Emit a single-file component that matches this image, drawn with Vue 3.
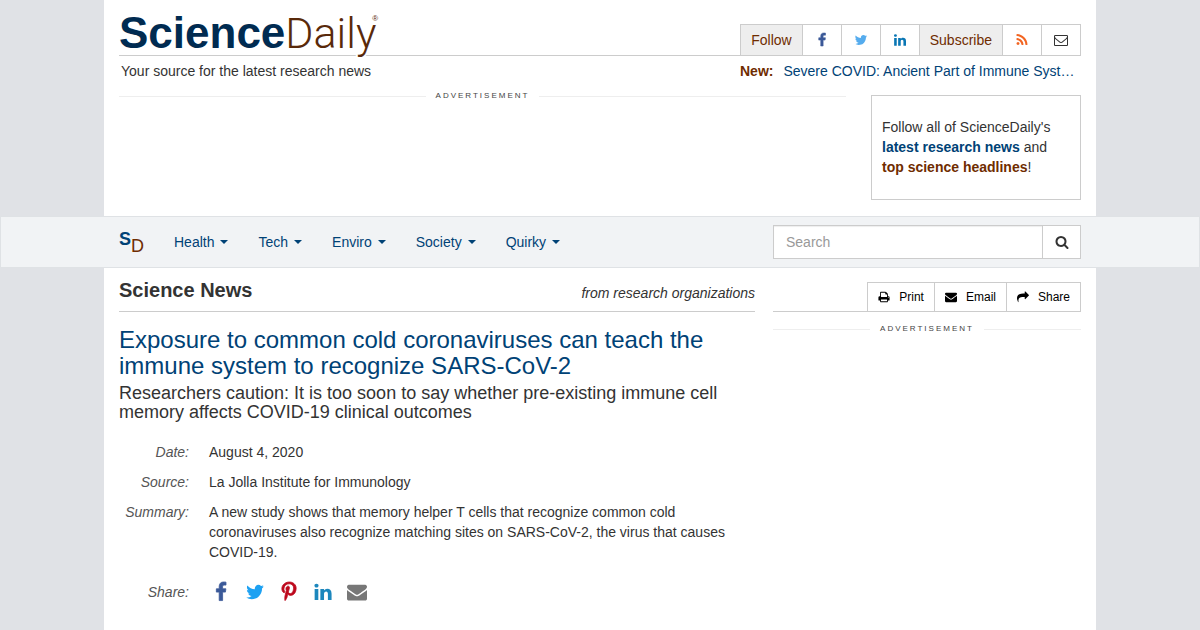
<script setup>
const icons = {
  facebook: 'M1343 12v264h-157q-86 0-116 36t-30 108v189h293l-39 296h-254v759h-306v-759h-255v-296h255v-218q0-186 104-288.5t277-102.5q147 0 228 12z',
  twitter: 'M1684 408q-67 98-162 167 1 14 1 42 0 130-38 259.5t-115.5 248.5-184.5 210.5-258 146-323 54.5q-271 0-496-145 35 4 78 4 225 0 401-138-105-2-188-64.5t-114-159.5q33 5 61 5 43 0 85-11-112-23-185.5-111.5t-73.5-205.5v-4q68 38 146 41-66-44-105-115t-39-154q0-88 44-163 121 149 294.5 238.5t371.5 99.5q-8-38-8-74 0-134 94.5-228.5t228.5-94.5q140 0 236 102 109-21 205-78-37 115-142 178 93-10 186-50z',
  linkedin: 'M477 625v991h-330v-991h330zm21-306q1 73-50.5 122t-135.5 49h-2q-82 0-132-49t-50-122q0-74 51.5-122.5t134.5-48.5 133 48.5 51 122.5zm1166 729v568h-329v-530q0-105-40.5-164.5t-126.5-59.5q-63 0-105.5 34.5t-63.5 85.5q-11 30-11 81v553h-329q2-399 2-647t-1-296l-1-48h329v144h-2q20-32 41-56t56.5-52 87-43.5 114.5-15.5q171 0 275 113.5t104 332.5z',
  rss: 'M576 1344q0 80-56 136t-136 56-136-56-56-136 56-136 136-56 136 56 56 136zm512 123q2 28-17 48-18 21-47 21h-135q-25 0-43-16.5t-20-41.5q-22-229-184.5-391.5t-391.5-184.5q-25-2-41.5-20t-16.5-43v-135q0-29 21-47 17-17 43-17h5q160 13 306 80.5t259 181.5q114 113 181.5 259t80.5 306zm512 2q2 27-18 47-18 20-46 20h-143q-26 0-44.5-17.5t-19.5-42.5q-12-215-101-408.5t-231.5-336-336-231.5-408.5-102q-25-1-42.5-19.5t-17.5-43.5v-143q0-28 20-46 18-18 44-18h3q262 13 501.5 120t425.5 294q187 186 294 425.5t120 501.5z',
  envelopeOutline: 'M1664 1504v-768q-32 36-69 66-268 206-426 338-51 43-83 67t-86.5 48.5-102.5 24.5h-2q-48 0-102.5-24.5t-86.5-48.5-83-67q-158-132-426-338-37-30-69-66v768q0 13 9.5 22.5t22.5 9.5h1472q13 0 22.5-9.5t9.5-22.5zm0-1051v-24.5l-.5-13-3-12.5-5.5-9-9-7.5-14-2.5h-1472q-13 0-22.5 9.5t-9.5 22.5q0 168 147 284 193 152 401 317 6 5 35 29.5t46 37.5 44.5 31.5 50.5 27.5 43 9h2q20 0 43-9t50.5-27.5 44.5-31.5 46-37.5 35-29.5q208-165 401-317 54-43 100.5-115.5t46.5-131.5zm128-37v1088q0 66-47 113t-113 47h-1472q-66 0-113-47t-47-113v-1088q0-66 47-113t113-47h1472q66 0 113 47t47 113z',
  envelope: 'M1792 710v794q0 66-47 113t-113 47h-1472q-66 0-113-47t-47-113v-794q44 49 101 87 362 246 497 345 57 42 92.5 65.5t94.5 48 110 24.5h2q51 0 110-24.5t94.5-48 92.5-65.5q170-123 498-345 57-39 100-87zm0-294q0 79-49 151t-122 123q-376 261-468 325-10 7-42.5 30.5t-54 38-52 32.5-57.5 27-50 9h-2q-23 0-50-9t-57.5-27-52-32.5-54-38-42.5-30.5q-91-64-262-182.5t-205-142.5q-62-42-117-115.5t-55-136.5q0-78 41.5-130t118.5-52h1472q65 0 112.5 47t47.5 113z',
  search: 'M1216 832q0-185-131.5-316.5t-316.5-131.5-316.5 131.5-131.5 316.5 131.5 316.5 316.5 131.5 316.5-131.5 131.5-316.5zm512 832q0 52-38 90t-90 38q-54 0-90-38l-343-342q-179 124-399 124-143 0-273.5-55.5t-225-150-150-225-55.5-273.5 55.5-273.5 150-225 225-150 273.5-55.5 273.5 55.5 225 150 150 225 55.5 273.5q0 220-124 399l343 343q37 37 37 90z',
  print: 'M448 1536h896v-256h-896v256zm0-640h896v-384h-160q-40 0-68-28t-28-68v-160h-640v640zm1152 64q0-26-19-45t-45-19-45 19-19 45 19 45 45 19 45-19 19-45zm128 0v416q0 13-9.5 22.5t-22.5 9.5h-224v160q0 40-28 68t-68 28h-960q-40 0-68-28t-28-68v-160h-224q-13 0-22.5-9.5t-9.5-22.5v-416q0-79 56.5-135.5t135.5-56.5h64v-544q0-40 28-68t68-28h672q40 0 88 20t76 48l152 152q28 28 48 76t20 88v256h64q79 0 135.5 56.5t56.5 135.5z',
  share: 'M1792 640q0 26-19 45l-512 512q-19 19-45 19t-45-19-19-45v-256h-224q-98 0-175.5 6t-154 21.5-133 42.5-105.5 69.5-80 101-48.5 138.5-17.5 181q0 55 5 123 0 6 2.5 23.5t2.5 26.5q0 15-8.5 25t-23.5 10q-16 0-28-17-7-9-13-22t-13.5-30-10.5-24q-127-285-127-451 0-199 53-333 162-403 875-403h224v-256q0-26 19-45t45-19 45 19l512 512q19 19 19 45z',
  pinterest: 'M256 597q0-108 37.5-203.5t103.5-166.5 152-123 185-78 202-26q158 0 294 66.5t221 193.5 85 287q0 96-19 188t-60 177-100 149.5-145 103-189 38.5q-68 0-135-32t-96-88q-10 39-28 112.5t-23.5 95-20.5 71-26 71-32 62.5-46 77.5-62 86.5l-14 5-9-10q-15-157-15-188 0-92 21.5-206.5t66.5-287.5 52-203q-32-65-32-169 0-83 52-156t132-73q61 0 95 40.5t34 102.5q0 66-44 191t-44 187q0 63 45 104.5t109 41.5q55 0 102-25t78.5-68 56-95 38-110.5 20-111 6.5-99.5q0-173-109.5-269.5t-285.5-96.5q-200 0-334 129.5t-134 328.5q0 44 12.5 85t27 65 27 45.5 12.5 30.5q0 28-15 73t-37 45q-2 0-17-3-51-15-90.5-56t-61-94.5-32.5-108-11-106.5z'
}
const menus = ['Health', 'Tech', 'Enviro', 'Society', 'Quirky']
const follow = ['facebook', 'twitter', 'linkedin']
const subscribe = ['rss', 'envelopeOutline']
const shares = ['facebook', 'twitter', 'pinterest', 'linkedin', 'envelope']
const tools = [
  { label: 'Print', icon: 'print' },
  { label: 'Email', icon: 'envelope' },
  { label: 'Share', icon: 'share' }
]
</script>

<template>
  <div class="page">
    <header class="top container">
      <div class="masthead">
        <a class="logo" href="#"><b>Science</b><span class="daily">Daily</span><sup>®</sup></a>
        <div class="social">
          <span class="tag">Follow</span>
          <a v-for="name in follow" :key="name" href="#" :class="name" :aria-label="name">
            <svg viewBox="0 0 1792 1792"><path :d="icons[name]" /></svg>
          </a>
          <span class="tag">Subscribe</span>
          <a v-for="name in subscribe" :key="name" href="#" :class="name" :aria-label="name">
            <svg viewBox="0 0 1792 1792"><path :d="icons[name]" /></svg>
          </a>
        </div>
      </div>
      <div class="tagline">
        <span>Your source for the latest research news</span>
        <div class="latest">
          <strong>New:</strong>
          <a href="#">Severe COVID: Ancient Part of Immune Syst…</a>
        </div>
      </div>
      <div class="banner">
        <div class="ad">Advertisement</div>
        <aside class="promo">
          <p>Follow all of ScienceDaily's<br /><a href="#">latest research news</a> and<br /><a class="brown" href="#">top science headlines</a>!</p>
        </aside>
      </div>
    </header>

    <nav class="navbar">
      <div class="container navrow">
        <a class="brand" href="#"><b>S</b><span>D</span></a>
        <ul>
          <li v-for="menu in menus" :key="menu"><a href="#">{{ menu }}<i class="caret"></i></a></li>
        </ul>
        <form class="search" @submit.prevent>
          <input type="text" placeholder="Search" aria-label="Search" />
          <button type="submit" aria-label="Submit search">
            <svg viewBox="0 0 1792 1792"><path :d="icons.search" /></svg>
          </button>
        </form>
      </div>
    </nav>

    <div class="container body">
      <main>
        <div class="section">
          <h2>Science News</h2>
          <em>from research organizations</em>
        </div>
        <h1>Exposure to common cold coronaviruses can teach the immune system to recognize SARS-CoV-2</h1>
        <p class="subtitle">Researchers caution: It is too soon to say whether pre-existing immune cell memory affects COVID-19 clinical outcomes</p>
        <dl>
          <dt>Date:</dt>
          <dd>August 4, 2020</dd>
          <dt>Source:</dt>
          <dd>La Jolla Institute for Immunology</dd>
          <dt>Summary:</dt>
          <dd>A new study shows that memory helper T cells that recognize common cold coronaviruses also recognize matching sites on SARS-CoV-2, the virus that causes COVID-19.</dd>
          <dt class="share-label">Share:</dt>
          <dd class="shares">
            <a v-for="name in shares" :key="name" href="#" :class="name" :aria-label="name">
              <svg viewBox="0 0 1792 1792"><path :d="icons[name]" /></svg>
            </a>
          </dd>
        </dl>
      </main>
      <aside class="sidebar">
        <div class="toolbar">
          <div class="tools">
            <button v-for="tool in tools" :key="tool.label" type="button">
              <svg viewBox="0 0 1792 1792"><path :d="icons[tool.icon]" /></svg>{{ tool.label }}
            </button>
          </div>
        </div>
        <div class="ad">Advertisement</div>
      </aside>
    </div>
  </div>
</template>

<style>
body {
  background: #e0e2e6;
}
</style>

<style scoped>
* {
  box-sizing: border-box;
}
.page {
  display: flex;
  flex-direction: column;
  min-height: 100vh;
  font: 14px/20px "Liberation Sans", Arial, sans-serif;
  color: #333;
}
a {
  color: #004276;
  text-decoration: none;
}
svg {
  display: block;
  overflow: visible;
  fill: currentColor;
}
h1, h2, p, dl, dd, ul {
  margin: 0;
  padding: 0;
}
.container {
  width: 100%;
  max-width: 992px;
  margin: 0 auto;
  padding: 0 15px;
}
.top {
  background: #fff;
  padding-bottom: 16px;
}
.masthead {
  display: flex;
  justify-content: space-between;
  align-items: flex-end;
  height: 56px;
  border-bottom: 1px solid #ccc;
}
.logo {
  display: flex;
  align-items: baseline;
  font-size: 44px;
  line-height: 44px;
  color: #002b51;
  text-shadow: 2px 0 #fff, -2px 0 #fff, 0 2px #fff, 0 -2px #fff;
}
.daily {
  font: 300 43px/44px Roboto, "Liberation Sans", sans-serif;
  color: #59290a;
}
.logo sup {
  align-self: flex-start;
  font-size: 8px;
  line-height: 16px;
  margin-left: -4px;
  color: #59290a;
}
.social {
  display: flex;
  height: 32px;
  margin-bottom: -1px;
  border: 1px solid #ccc;
  background: #fff;
}
.social > * {
  display: flex;
  align-items: center;
  justify-content: center;
  width: 39px;
  border-left: 1px solid #ccc;
}
.social > :first-child {
  border-left: 0;
}
.social .tag {
  width: auto;
  padding: 0 10px;
  background: #eee;
  color: #6f2c00;
}
.social svg {
  width: 14px;
  height: 14px;
}
.facebook { color: #3b5998; }
.twitter { color: #55acee; }
.linkedin { color: #0976b4; }
.rss { color: #f26522; }
.envelopeOutline { color: #333; }
.pinterest { color: #bd081c; }
.facebook svg,
.pinterest svg {
  stroke: currentColor;
  stroke-width: 70;
}
.tagline {
  display: flex;
  justify-content: space-between;
  padding: 5px 3px 0 2px;
}
.latest {
  display: flex;
  gap: 10px;
  width: 338px;
}
.latest strong {
  color: #6f2c00;
}
.latest a {
  white-space: nowrap;
}
.banner {
  display: flex;
  align-items: flex-start;
  gap: 25px;
  padding-top: 14px;
}
.ad {
  display: flex;
  flex: 1;
  align-items: center;
  gap: 10px;
  font-size: 8px;
  line-height: 10px;
  letter-spacing: 2px;
  text-transform: uppercase;
  color: #444;
}
.ad::before,
.ad::after {
  content: "";
  flex: 1;
  border-top: 1px solid #eee;
}
.banner .ad {
  margin-top: -4px;
}
.promo {
  width: 210px;
  padding: 21px 10px 22px;
  border: 1px solid #ccc;
}
.promo a {
  font-weight: bold;
}
.promo .brown {
  color: #6f2c00;
}
.navbar {
  border: 1px solid #dfe2e5;
  background: #f1f3f5;
}
.navrow {
  display: flex;
  align-items: center;
  height: 50px;
}
.brand {
  display: flex;
  width: 40px;
  font-size: 18px;
  line-height: 20px;
}
.brand b {
  padding-bottom: 7px;
}
.brand span {
  padding-top: 7px;
  color: #6f2c00;
}
.navrow ul {
  display: flex;
  flex: 1;
  list-style: none;
}
.navrow li a {
  display: flex;
  align-items: center;
  padding: 0 15px;
}
.caret {
  margin-left: 6px;
  border: 4px solid transparent;
  border-top-color: currentColor;
  border-bottom: 0;
}
.search {
  display: flex;
  width: 308px;
  height: 34px;
  border: 1px solid #ccc;
  background: #fff;
}
.search input {
  flex: 1;
  min-width: 0;
  padding: 0 12px;
  border: 0;
  background: none;
  box-shadow: inset 0 1px 1px #eee;
  font: inherit;
  color: #555;
}
.search input::placeholder {
  color: #999;
}
.search button {
  width: 38px;
  padding: 0 12px;
  border: 0;
  border-left: 1px solid #ccc;
  background: none;
  color: #333;
}
.search svg {
  width: 14px;
  height: 14px;
}
.body {
  display: flex;
  flex: 1;
  gap: 18px;
  background: #fff;
}
main {
  flex: 1;
}
.section {
  display: flex;
  justify-content: space-between;
  align-items: flex-end;
  height: 44px;
  padding-bottom: 8px;
  border-bottom: 1px solid #ccc;
}
.section h2 {
  font-size: 20px;
  line-height: 26px;
}
h1 {
  margin-top: 15px;
  font-size: 24px;
  font-weight: normal;
  line-height: 26px;
  color: #004276;
}
.subtitle {
  margin-top: 5px;
  font-size: 18px;
  line-height: 19px;
}
dl {
  display: grid;
  grid-template-columns: 70px 1fr;
  gap: 10px 20px;
  margin-top: 20px;
}
dt {
  font-style: italic;
  text-align: right;
  color: #555;
}
.share-label,
.shares {
  padding-top: 10px;
}
.shares {
  display: flex;
  gap: 10px;
}
.shares a {
  display: flex;
  justify-content: center;
  width: 24px;
}
.shares svg {
  width: 20px;
  height: 20px;
}
.shares .twitter { color: #1da1f2; }
.shares .linkedin { color: #1c87bd; }
.shares .envelope { color: #777; }
.sidebar {
  width: 308px;
}
.toolbar {
  display: flex;
  justify-content: flex-end;
  height: 44px;
  margin-bottom: 12px;
  padding-top: 14px;
  border-bottom: 1px solid #ccc;
}
.tools {
  display: flex;
  height: 30px;
  border: 1px solid #ccc;
}
.tools button {
  display: flex;
  align-items: center;
  gap: 9px;
  padding: 0 10px;
  border: 0;
  border-left: 1px solid #ccc;
  background: #fff;
  font: 12px/18px "Liberation Sans", Arial, sans-serif;
  color: #000;
}
.tools button:first-child {
  border-left: 0;
}
.tools svg {
  width: 12px;
  height: 12px;
}
</style>
